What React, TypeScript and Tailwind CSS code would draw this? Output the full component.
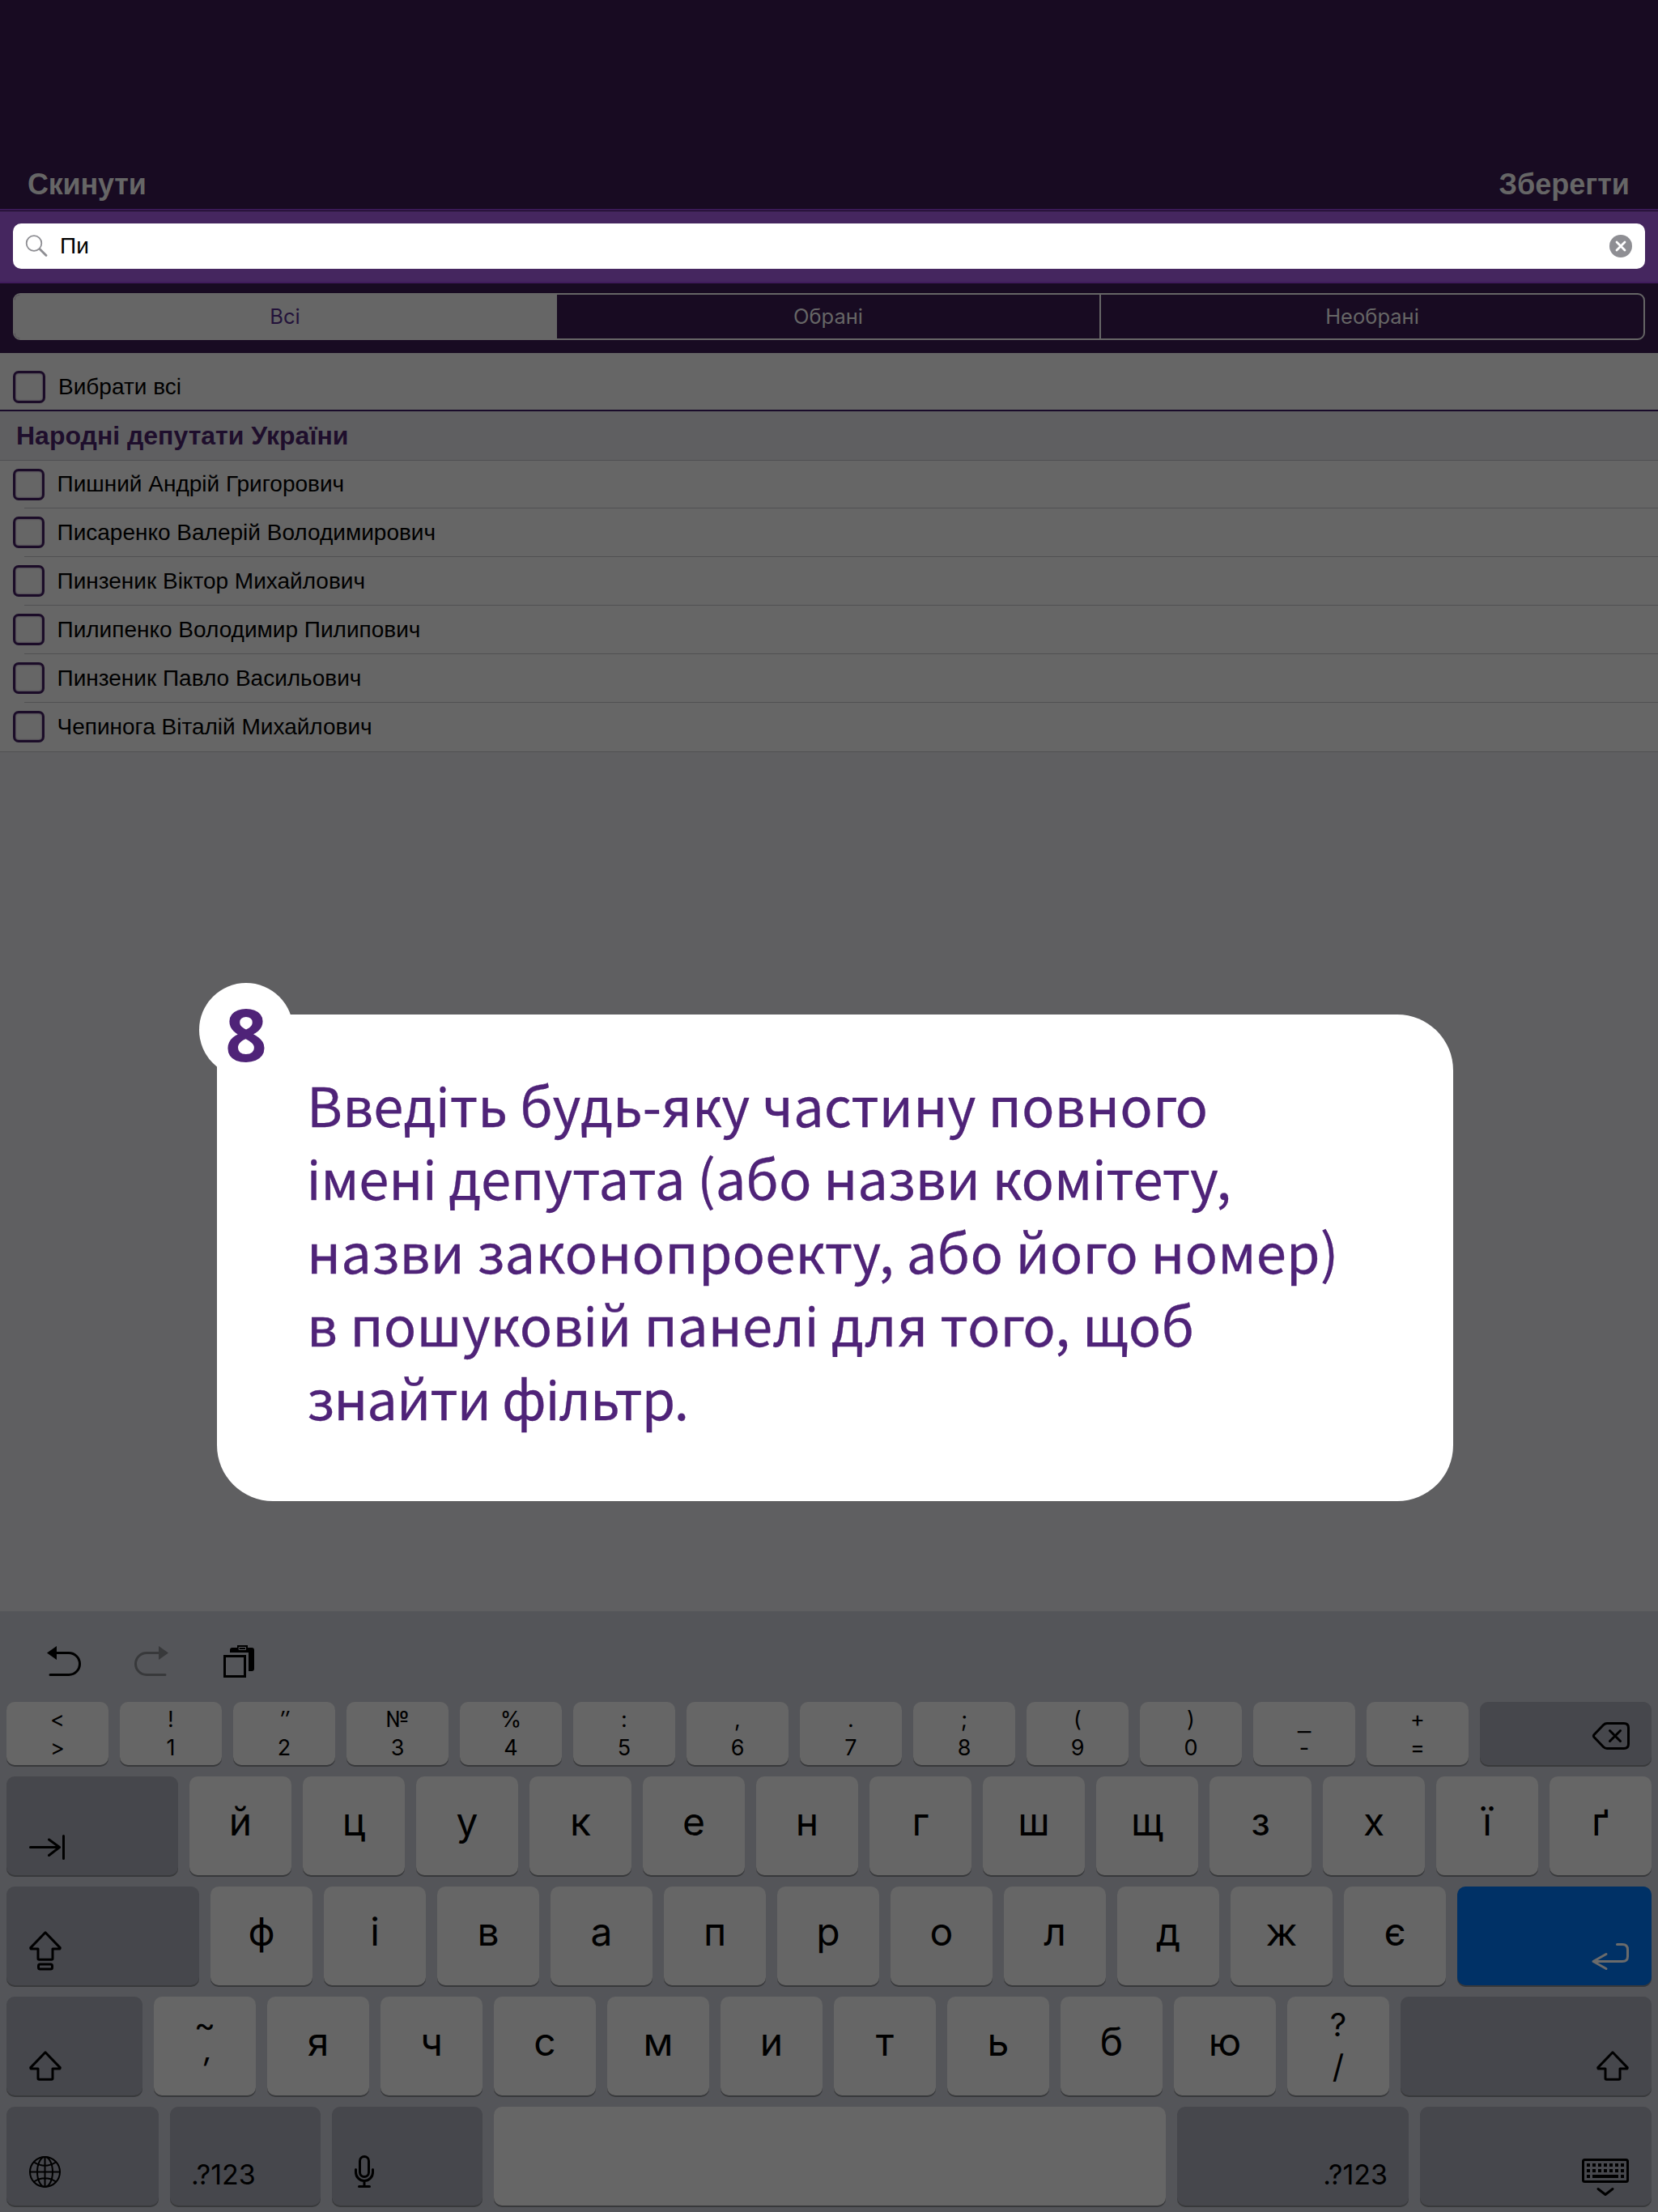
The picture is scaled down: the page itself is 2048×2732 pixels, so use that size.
import type { ReactNode } from "react";

const deputies = [
  "Пишний Андрій Григорович",
  "Писаренко Валерій Володимирович",
  "Пинзеник Віктор Михайлович",
  "Пилипенко Володимир Пилипович",
  "Пинзеник Павло Васильович",
  "Чепинога Віталій Михайлович",
];

const numberKeys: [string, string, string][] = [
  ["<", ">", ""],
  ["!", "1", ""],
  ["″", "2", "italic"],
  ["№", "3", ""],
  ["%", "4", ""],
  [":", "5", ""],
  [",", "6", ""],
  [".", "7", ""],
  [";", "8", ""],
  ["(", "9", ""],
  [")", "0", ""],
  ["_", "-", "translate-y-[5px] scale-x-[1.35]"],
  ["+", "=", ""],
];

const hintLines: [string, string][] = [
  ["Введіть будь-яку частину повного", "tracking-[0.11px]"],
  ["імені депутата (або назви комітету,", "tracking-[-0.15px]"],
  ["назви законопроекту, або його номер)", "tracking-[0.15px]"],
  ["в пошуковій панелі для того, щоб", "tracking-[0.11px]"],
  ["знайти фільтр.", "tracking-[-1px]"],
];

type IconProps = { box: [number, number, number, number]; children: ReactNode; className?: string };

function Icon({ box, children, className = "" }: IconProps) {
  return (
    <svg
      viewBox={box.join(" ")}
      width={box[2]}
      height={box[3]}
      fill="none"
      stroke="currentColor"
      strokeWidth={3}
      strokeLinecap="round"
      strokeLinejoin="round"
      className={"shrink-0 " + className}
    >
      {children}
    </svg>
  );
}

function Key({ className = "", children }: { className?: string; children?: ReactNode }) {
  return <div className={"flex rounded-[10px] shadow-[0_2px_0_#38393b] " + className}>{children}</div>;
}

function Letter({ children }: { children: ReactNode }) {
  return (
    <Key className="h-[122px] w-[126px] items-center justify-center bg-[#666666] pb-[10px] text-[48px] leading-none">
      {children}
    </Key>
  );
}

function DoubleKey({ top, bottom, accent = "" }: { top: string; bottom: string; accent?: string }) {
  return (
    <Key className="h-[122px] w-[126px] flex-col items-center bg-[#666666] pt-[9px] text-[40px] leading-[52px]">
      <span>{top}</span>
      <span className={accent}>{bottom}</span>
    </Key>
  );
}

const dark = "h-[122px] items-end bg-[#46474c] ";

function ShiftArrow() {
  return <path d="M20 1.8 1.8 20.6Q1.5 22 3 22H11V34Q11 35.3 12.3 35.3H27.7Q29 35.3 29 34V22H37Q38.5 22 38.2 20.6Z" />;
}

function Checkbox({ className }: { className: string }) {
  return (
    <div className={"shrink-0 rounded-[7px] border-[3px] border-[#1b0c28] shadow-[inset_0_0_2px_#2a1a38] " + className} />
  );
}

function Keyboard() {
  return (
    <div className="flex h-[742px] flex-col bg-[#545559] px-2 font-['Inter',sans-serif] text-black">
      <div className="flex h-[112px] shrink-0 items-start pt-[40px] pl-[48px]">
        <Icon box={[56, 2030, 48, 44]}>
          <path d="M68 2041.5H85A13.5 13.5 0 0 1 85 2068.5H62" />
          <path d="M58 2041.5 70 2033V2050Z" fill="currentColor" stroke="none" />
        </Icon>
        <Icon box={[164, 2030, 48, 44]} className="ml-[60px] text-[#38393b]">
          <path d="M197 2041.5H181A13.5 13.5 0 0 0 181 2068.5H204" />
          <path d="M208 2041.5 196 2033V2050Z" fill="currentColor" stroke="none" />
        </Icon>
        <Icon box={[272, 2030, 48, 44]} className="ml-[60px]">
          <rect x="277.5" y="2045.5" width="25" height="25" strokeLinejoin="miter" />
          <path
            d="M284 2041V2038Q284 2035 287 2035H311Q314 2035 314 2038V2061Q314 2064 311 2064H307V2041Z"
            fill="currentColor"
            stroke="none"
          />
          <rect x="293" y="2032" width="13" height="7" fill="currentColor" stroke="none" />
          <rect x="295.5" y="2034.5" width="8" height="3" stroke="#545559" strokeWidth="1" />
        </Icon>
      </div>

      <div className="flex flex-col gap-[14px]">
        <div className="flex gap-[14px]">
          {numberKeys.map(([top, bottom, accent]) => (
            <Key
              key={bottom}
              className="h-[78px] w-[126px] flex-col items-center bg-[#666666] pt-1 text-[27px] leading-[35px]"
            >
              <span className={accent}>{top}</span>
              <span>{bottom}</span>
            </Key>
          ))}
          <Key className="h-[78px] flex-1 items-end justify-end bg-[#46474c] pr-[26px] pb-[18px]">
            <Icon box={[1966, 2126, 48, 36]}>
              <path d="M1985 2128.5H2006Q2011.5 2128.5 2011.5 2134V2154Q2011.5 2159.5 2006 2159.5H1985Q1982.5 2159.5 1980.5 2157.5L1969 2145.5Q1967.8 2144 1969 2142.5L1980.5 2130.5Q1982.5 2128.5 1985 2128.5Z" />
              <path d="M1988.5 2137.5 2001.5 2150.5M2001.5 2137.5 1988.5 2150.5" />
            </Icon>
          </Key>
        </div>

        <div className="flex gap-[14px]">
          <Key className={dark + "w-[212px] pb-[18px] pl-[26px]"}>
            <Icon box={[34, 2264, 48, 34]}>
              <path d="M37.5 2281.5H73M60.5 2272 73.5 2281.5 60.5 2291.5M78.5 2267.5V2295.5" />
            </Icon>
          </Key>
          {[..."йцукенгшщзхїґ"].map((c) => (
            <Letter key={c}>{c}</Letter>
          ))}
        </div>

        <div className="flex gap-[14px]">
          <Key className={dark + "w-[238px] pb-[17px] pl-[28px]"}>
            <Icon box={[0, 0, 40, 50]}>
              <ShiftArrow />
              <rect x="11.5" y="41" width="17" height="6" rx="2" />
            </Icon>
          </Key>
          {[..."фівапролджє"].map((c) => (
            <Letter key={c}>{c}</Letter>
          ))}
          <Key className="h-[122px] flex-1 items-end justify-end bg-[#003166] pr-[26px] pb-[18px] text-[#6b6b6b]">
            <Icon box={[1964, 2398, 50, 36]}>
              <path d="M1997.5 2401.5H2004Q2010.5 2401.5 2010.5 2408V2416.5Q2010.5 2422.5 2004 2422.5H1968M1984 2413.5 1968 2422.5 1984 2431.5" />
            </Icon>
          </Key>
        </div>

        <div className="flex gap-[14px]">
          <Key className={dark + "w-[168px] pb-[17px] pl-[28px]"}>
            <Icon box={[0, 0, 40, 38]}>
              <ShiftArrow />
            </Icon>
          </Key>
          <DoubleKey top="~" bottom="′" accent="translate-y-[3px] italic" />
          {[..."ячсмитьбю"].map((c) => (
            <Letter key={c}>{c}</Letter>
          ))}
          <DoubleKey top="?" bottom="/" />
          <Key className={dark + "flex-1 justify-end pr-[28px] pb-[17px]"}>
            <Icon box={[0, 0, 40, 38]}>
              <ShiftArrow />
            </Icon>
          </Key>
        </div>

        <div className="flex gap-[14px]">
          <Key className={dark + "w-[188px] pb-[21px] pl-[27px]"}>
            <Icon box={[0, 0, 41, 41]}>
              <g strokeWidth="2">
                <circle cx="20.5" cy="20.5" r="18.5" />
                <ellipse cx="20.5" cy="20.5" rx="9.5" ry="18.5" />
                <path d="M20.5 2V39M2 20.5H39M7 8.5Q20.5 17 34 8.5M7 32.5Q20.5 24 34 32.5" />
              </g>
            </Icon>
          </Key>
          <Key className={dark + "w-[186px] pb-[21px] pl-[26px] text-[34px] leading-[34px]"}>.?123</Key>
          <Key className={dark + "w-[186px] pb-[21px] pl-[26px]"}>
            <Icon box={[436, 2661, 28, 42]}>
              <rect x="444.5" y="2663.5" width="11" height="25" rx="5.5" />
              <path d="M439.5 2679.5V2683A10.5 10.5 0 0 0 460.5 2683V2679.5M450 2694V2700M443.5 2700.5H456.5" />
            </Icon>
          </Key>
          <Key className="h-[122px] w-[830px] bg-[#666666]" />
          <Key className={dark + "w-[286px] justify-end pr-[26px] pb-[21px] text-[34px] leading-[34px]"}>
            .?123
          </Key>
          <Key className={dark + "w-[286px] justify-end pr-[27px] pb-[11px]"}>
            <Icon box={[1953, 2665, 60, 48]}>
              <rect x="1955.5" y="2667.5" width="55" height="27" rx="2" />
              <path d="M1974 2703.5 1983 2710.5 1992 2703.5" />
              <g fill="currentColor" stroke="none">
                {[1960, 1967, 1974, 1981, 1988, 1995, 2002].map((x) => (
                  <g key={x}>
                    <rect x={x} y="2672" width="4" height="4" />
                    <rect x={x} y="2679" width="4" height="4" />
                  </g>
                ))}
                <rect x="1960" y="2686" width="4" height="4" />
                <rect x="1967" y="2686" width="32" height="4" />
                <rect x="2002" y="2686" width="4" height="4" />
              </g>
            </Icon>
          </Key>
        </div>
      </div>
    </div>
  );
}

function Hint() {
  return (
    <div className="absolute top-[1253px] left-[268px] h-[601px] w-[1527px] rounded-[69px] rounded-tl-none bg-white pt-[65px] pl-[111px] text-[#4f2378]">
      <div className="absolute top-[-39px] left-[-22px] flex h-[116px] w-[116px] items-center justify-center rounded-full bg-white pt-[8px] font-['Open_Sans',sans-serif] text-[90px] leading-none font-bold">
        8
      </div>
      <div className="font-['Noto_Sans_CJK_SC','Noto_Sans',sans-serif] text-[67px] leading-[90.4px] whitespace-nowrap [-webkit-text-stroke:0.3px_#4f2378]">
        {hintLines.map(([line, tracking]) => (
          <p key={line} className={tracking}>
            {line}
          </p>
        ))}
      </div>
    </div>
  );
}

export default function App() {
  return (
    <div className="relative flex h-[2732px] w-[2048px] flex-col overflow-hidden bg-[#5f5f61] font-['Liberation_Sans',Arial,sans-serif]">
      <header className="flex h-[258px] shrink-0 items-end justify-between bg-[#180b22] pr-[35px] pb-[10px] pl-[34px] text-[36px] leading-[40px] font-bold text-[#666666]">
        <span className="tracking-[-0.2px]">Скинути</span>
        <span>Зберегти</span>
      </header>

      <div className="h-[3px] shrink-0 border-b border-[#180b22] bg-[#3b1a57]" />
      <div className="h-[89px] shrink-0 border-b-2 border-[#401c5c] bg-[#45265f] px-4 pt-[15px]">
        <div className="flex h-[56px] items-center rounded-[10px] bg-white pr-4 pl-[15px] text-[28px] text-black">
          <Icon box={[0, 0, 30, 30]} className="text-[#8e8e93]">
            <circle cx="11" cy="11.5" r="9.3" strokeWidth="1.8" />
            <path d="M18 18.5 26 26.5" strokeWidth="2.8" />
          </Icon>
          <span className="ml-[13px] flex-1 leading-[56px]">Пи</span>
          <Icon box={[0, 0, 28, 28]}>
            <circle cx="14" cy="14" r="14" fill="#8e8e93" stroke="none" />
            <path d="M9 9 19 19M19 9 9 19" stroke="#ffffff" strokeWidth="2.8" />
          </Icon>
        </div>
      </div>

      <div className="h-[86px] shrink-0 bg-[#180b22] px-4 pt-3">
        <div className="grid h-[58px] grid-cols-[670px_672px_1fr] divide-x-2 divide-[#666666] overflow-hidden rounded-[9px] border-2 border-[#666666] text-center font-['Inter',sans-serif] text-[25.5px] leading-[54px] text-[#666666]">
          <div className="bg-[#666666] text-[#23123a]">Всі</div>
          <div>Обрані</div>
          <div>Необрані</div>
        </div>
      </div>

      <div className="flex h-[72px] shrink-0 items-center border-b-2 border-[#190b2a] bg-[#666666] pt-[14px] pl-4 text-[28px] text-black">
        <Checkbox className="h-[40px] w-[40px]" />
        <span className="ml-4">Вибрати всі</span>
      </div>
      <div className="flex h-[60px] shrink-0 items-center pl-5 text-[32px] font-bold text-[#1e0e2c]">
        Народні депутати України
      </div>
      <div className="h-[361px] shrink-0 border-y border-[#505052] bg-[#666666] text-[28px] text-black">
        {deputies.map((name, i) => (
          <div key={name} className="h-[60px] first:h-[59px]">
            <div className={i === 0 ? "flex h-[58px] items-center pl-4" : "flex h-[59px] items-center pl-4"}>
              <Checkbox className="h-[39px] w-[39px]" />
              <span className="ml-[15.5px]">{name}</span>
            </div>
            {i < deputies.length - 1 && <div className="ml-[30px] h-px bg-[#505052]" />}
          </div>
        ))}
      </div>

      <div className="flex-1" />
      <Keyboard />
      <Hint />
    </div>
  );
}
